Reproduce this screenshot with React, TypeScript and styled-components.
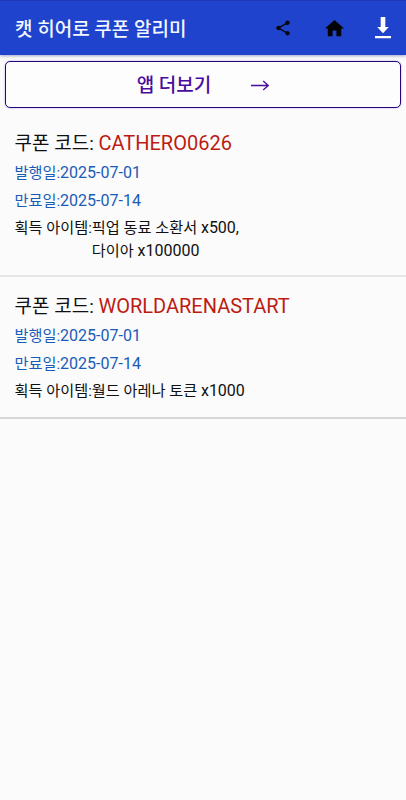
import React from 'react';
import styled, { createGlobalStyle } from 'styled-components';

const GlobalStyle = createGlobalStyle`
  *, *::before, *::after { box-sizing: border-box; }
  html, body { margin: 0; padding: 0; background: #fbfbfb; }
  body { font-family: Roboto, "Noto Sans CJK KR", sans-serif; color: #101010; }
`;

const Screen = styled.div`
  display: flex;
  flex-direction: column;
  width: 100%;
  min-height: 100vh;
  background: #fbfbfb;
`;

const AppBar = styled.header`
  display: flex;
  align-items: center;
  height: 55px;
  padding: 0 15px 0 15px;
  background: #1f43cd;
  border-top: 1px solid #2138b8;
  box-shadow: 0 1px 3px rgba(20, 40, 110, 0.4);
`;

const AppTitle = styled.h1`
  flex: 1;
  margin: 0;
  padding-top: 3px;
  font-size: 19px;
  font-weight: 500;
  line-height: 28px;
  color: #f4f7ff;
  white-space: nowrap;
`;

const Actions = styled.nav`
  display: flex;
  align-items: center;
`;

const IconButton = styled.button<{ $gap?: number }>`
  display: flex;
  padding: 0;
  margin: 0 0 0 ${(p) => p.$gap ?? 0}px;
  border: 0;
  background: none;
`;

const MoreButton = styled.button`
  display: flex;
  align-items: center;
  justify-content: center;
  gap: 40px;
  height: 47px;
  margin: 6px 5px 0;
  padding: 2px 0 0;
  border: 1px solid #25067a;
  border-radius: 5px;
  background: #fdfdfe;
  box-shadow: 0 0 2px rgba(80, 50, 220, 0.45);
  color: #4a0b9e;
  font-family: inherit;
  font-size: 19px;
  font-weight: 500;
  line-height: 28px;
`;

const CouponList = styled.main`
  display: flex;
  flex-direction: column;
  padding-top: 20px;
`;

const Coupon = styled.article<{ $last?: boolean }>`
  display: flex;
  flex-direction: column;
  padding: 0 15px ${(p) => (p.$last ? 15 : 14)}px 14.5px;
  margin-bottom: 14px;
  border-bottom: 2px solid ${(p) => (p.$last ? '#d6d6d6' : '#e5e5e5')};
`;

const CodeLine = styled.h2`
  display: flex;
  align-items: baseline;
  margin: 0;
  height: 30px;
  font-size: 20px;
  font-weight: 400;
  line-height: 30px;
  white-space: pre;
`;

const Label = styled.span`
  font-size: 0.95em;
`;

const Code = styled.span`
  color: #bd1b12;
`;

const DateLine = styled.p`
  display: flex;
  align-items: baseline;
  margin: 0;
  height: 27.5px;
  font-size: 16px;
  line-height: 29px;
  color: #1a5bb8;
`;

const Reward = styled.div`
  display: flex;
  align-items: baseline;
  padding-top: 4px;
  margin-bottom: -1px;
  font-size: 16px;
  line-height: 21.5px;
`;

const RewardItems = styled.div`
  display: flex;
  flex-direction: column;
`;

const RewardItem = styled.div`
  display: flex;
  align-items: baseline;
  white-space: pre;
`;

type Item = { name: string; amount: string };
type CouponData = { code: string; issued: string; expires: string; items: Item[] };

const coupons: CouponData[] = [
  {
    code: 'CATHERO0626',
    issued: '2025-07-01',
    expires: '2025-07-14',
    items: [
      { name: '픽업 동료 소환서', amount: 'x500,' },
      { name: '다이아', amount: 'x100000' },
    ],
  },
  {
    code: 'WORLDARENASTART',
    issued: '2025-07-01',
    expires: '2025-07-14',
    items: [{ name: '월드 아레나 토큰', amount: 'x1000' }],
  },
];

const ShareIcon = () => (
  <svg width="18" height="18" viewBox="0 0 24 24" fill="#05070d">
    <path d="M18 16.08c-.76 0-1.44.3-1.96.77L8.91 12.7c.05-.23.09-.46.09-.7s-.04-.47-.09-.7l7.05-4.11c.54.5 1.25.81 2.04.81 1.66 0 3-1.34 3-3s-1.34-3-3-3-3 1.34-3 3c0 .24.04.47.09.7L8.04 9.81C7.5 9.31 6.79 9 6 9c-1.66 0-3 1.34-3 3s1.34 3 3 3c.79 0 1.5-.31 2.04-.81l7.12 4.16c-.05.21-.08.43-.08.65 0 1.61 1.31 2.92 2.92 2.92s2.92-1.31 2.92-2.92-1.31-2.92-2.92-2.92z" />
  </svg>
);

const HomeIcon = () => (
  <svg width="23" height="23" viewBox="0 0 24 24" fill="#020304">
    <path d="M10 20v-6h4v6h5v-8h3L12 3 2 12h3v8z" />
  </svg>
);

const DownloadIcon = () => (
  <svg width="16" height="22" viewBox="0 0 16 22" fill="#fff">
    <path d="M5.7 0h4.6v10h3.5L8 16.2 2.2 10h3.5zM0 19h16v2.2H0z" />
  </svg>
);

const ArrowIcon = () => (
  <svg width="18" height="12" viewBox="0 0 18 12" fill="none" stroke="#4a0b9e" strokeWidth="1.3">
    <path d="M0 5.5h17M12.2 1 17.2 5.5l-5 4.5" />
  </svg>
);

export default function App() {
  return (
    <>
      <GlobalStyle />
      <Screen>
        <AppBar>
          <AppTitle>캣 히어로 쿠폰 알리미</AppTitle>
          <Actions>
            <IconButton aria-label="공유"><ShareIcon /></IconButton>
            <IconButton aria-label="홈" $gap={31}><HomeIcon /></IconButton>
            <IconButton aria-label="다운로드" $gap={29}><DownloadIcon /></IconButton>
          </Actions>
        </AppBar>
        <MoreButton>
          <span>앱 더보기</span>
          <ArrowIcon />
        </MoreButton>
        <CouponList>
          {coupons.map((c, i) => (
            <Coupon key={c.code} $last={i === coupons.length - 1}>
              <CodeLine><Label>쿠폰 코드: </Label><Code>{c.code}</Code></CodeLine>
              <DateLine><Label>발행일:</Label><span>{c.issued}</span></DateLine>
              <DateLine><Label>만료일:</Label><span>{c.expires}</span></DateLine>
              <Reward>
                <Label>획득 아이템:</Label>
                <RewardItems>
                  {c.items.map((item) => (
                    <RewardItem key={item.name}>
                      <Label>{item.name} </Label>
                      <span>{item.amount}</span>
                    </RewardItem>
                  ))}
                </RewardItems>
              </Reward>
            </Coupon>
          ))}
        </CouponList>
      </Screen>
    </>
  );
}
